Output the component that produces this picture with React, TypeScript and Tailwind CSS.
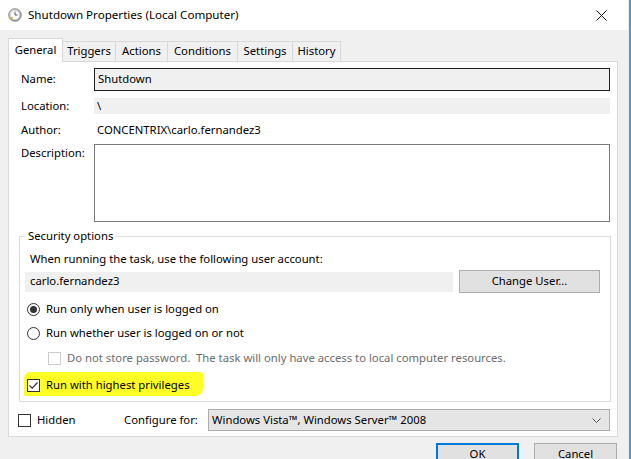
import React from 'react'

const font = { fontFamily: '"Noto Sans", "Segoe UI", sans-serif' }

function TaskIcon() {
  return (
    <svg width="14" height="14" viewBox="0 0 14 14">
      <defs>
        <radialGradient id="g" cx="40%" cy="35%" r="70%">
          <stop offset="0%" stopColor="#f4f4f4" />
          <stop offset="100%" stopColor="#9a9a9a" />
        </radialGradient>
      </defs>
      <circle cx="7" cy="7" r="6.3" fill="url(#g)" stroke="#7b7b7b" strokeWidth="0.8" />
      <circle cx="7" cy="7" r="4.6" fill="#fbfbfb" stroke="#c9c9c9" strokeWidth="0.5" />
      <path d="M7 3.6V7H9.6" fill="none" stroke="#5d5d5d" strokeWidth="1" />
      <path d="M2.5 9.5L5 10.2" stroke="#d9a400" strokeWidth="1.2" />
    </svg>
  )
}

function Tab({ label, active, w }: { label: string; active?: boolean; w: string }) {
  if (active) {
    return (
      <div className={`h-[24px] flex items-center justify-center bg-white border border-b-0 border-[#d9d9d9] -mb-px relative z-10 ${w}`}>
        {label}
      </div>
    )
  }
  return (
    <div className={`h-[20px] flex items-center justify-center bg-[#f0f0f0] border border-l-0 border-[#d9d9d9] border-b-0 ${w}`}>
      {label}
    </div>
  )
}

function Radio({ checked }: { checked?: boolean }) {
  return (
    <span className="w-[13px] h-[13px] rounded-full border border-[#333] bg-white flex items-center justify-center shrink-0">
      {checked && <span className="w-[7px] h-[7px] rounded-full bg-[#333]" />}
    </span>
  )
}

function Check({ checked, disabled }: { checked?: boolean; disabled?: boolean }) {
  return (
    <span
      className={
        disabled
          ? 'w-[13px] h-[13px] border border-[#cccccc] bg-white shrink-0'
          : 'w-[13px] h-[13px] border border-[#333] bg-white shrink-0 flex items-center justify-center'
      }
    >
      {checked && (
        <svg width="11" height="11" viewBox="0 0 11 11">
          <path d="M1.5 5.5L4.2 8.2L9.5 2.5" fill="none" stroke="#333" strokeWidth="1.2" />
        </svg>
      )}
    </span>
  )
}

export default function App() {
  return (
    <div className="w-[631px] h-[459px] overflow-hidden flex bg-[#f0f0f0] text-[11.3px] text-black" style={font}>
      <div className="w-[628px] flex flex-col">
        {/* title bar */}
        <div className="h-[30px] bg-white flex items-center shrink-0">
          <div className="ml-[8px] mr-[6px] flex items-center">
            <TaskIcon />
          </div>
          <span className="text-[11.6px] leading-none">Shutdown Properties (Local Computer)</span>
          <div className="ml-auto mr-[21px]">
            <svg width="11" height="11" viewBox="0 0 11 11">
              <path d="M0.5 0.5L10.5 10.5M10.5 0.5L0.5 10.5" stroke="#111" strokeWidth="1" />
            </svg>
          </div>
        </div>

        {/* tabs */}
        <div className="pl-[8px] pt-[8px] flex items-end shrink-0">
          <Tab label="General" active w="w-[55px]" />
          <Tab label="Triggers" w="w-[53px]" />
          <Tab label="Actions" w="w-[52px]" />
          <Tab label="Conditions" w="w-[70px]" />
          <Tab label="Settings" w="w-[55px]" />
          <Tab label="History" w="w-[48px]" />
        </div>

        {/* panel */}
        <div className="ml-[8px] w-[610px] h-[376px] shrink-0 bg-white border border-[#d9d9d9] flex flex-col">
          <div className="mt-[6px] flex items-center h-[23px] pl-[12px]">
            <span className="w-[73px]">Name:</span>
            <div className="w-[516px] h-[23px] border border-[#1e1e1e] bg-[#f0f0f0] pl-[3px] flex items-center">Shutdown</div>
          </div>
          <div className="mt-[7px] flex items-center h-[16px] pl-[12px]">
            <span className="w-[73px]">Location:</span>
            <div className="w-[516px] h-[16px] bg-[#f0f0f0] pl-[3px] flex items-center">\</div>
          </div>
          <div className="mt-[8px] flex items-center h-[16px] pl-[12px]">
            <span className="w-[73px]">Author:</span>
            <span className="pl-[3px]">CONCENTRIX\carlo.fernandez3</span>
          </div>
          <div className="mt-[6px] flex items-start pl-[12px]">
            <span className="w-[73px] leading-[18px]">Description:</span>
            <div className="w-[516px] h-[78px] border border-[#7a7a7a] bg-white" />
          </div>

          {/* group box */}
          <div className="relative ml-[10px] mr-[6px] mt-[14px] h-[166px] border border-[#dcdcdc] pl-[10px] pr-[9px] flex flex-col">
            <span className="absolute -top-[9px] left-[5px] bg-white px-[3px] leading-[16px]">Security options</span>
            <div className="mt-[14px] h-[16px] flex items-center">When running the task, use the following user account:</div>
            <div className="mt-[3px] -ml-[5px] flex items-center">
              <div className="w-[428px] h-[20px] bg-[#f0f0f0] pl-[5px] flex items-center">carlo.fernandez3</div>
              <div className="ml-[6px] w-[141px] h-[23px] bg-[#e1e1e1] border border-[#adadad] flex items-center justify-center">Change User...</div>
            </div>
            <div className="mt-[8px] -ml-[3px] flex items-center gap-[6px] h-[16px]">
              <Radio checked />
              <span>Run only when user is logged on</span>
            </div>
            <div className="mt-[8px] -ml-[3px] flex items-center gap-[6px] h-[16px]">
              <Radio />
              <span>Run whether user is logged on or not</span>
            </div>
            <div className="mt-[9px] ml-[18px] flex items-center gap-[6px] h-[16px] text-[#6d6d6d]">
              <Check disabled />
              <span className="whitespace-pre">Do not store password.  The task will only have access to local computer resources.</span>
            </div>
            <div className="relative mt-[11px] -ml-[3px] flex items-center gap-[6px] h-[16px]">
              <span className="absolute -left-[3px] -top-[5px] w-[179px] h-[24px] bg-[#ffff26] rounded-tl-[6px] rounded-tr-[3px] rounded-br-[8px] rounded-bl-[2px]" />
              <span className="relative flex items-center gap-[6px]">
                <Check checked />
                <span>Run with highest privileges</span>
              </span>
            </div>
          </div>

          <div className="mt-[7px] pl-[9px] flex items-center h-[22px]">
            <Check />
            <span className="ml-[6px] w-[87px]">Hidden</span>
            <span className="w-[84px]">Configure for:</span>
            <div className="w-[402px] h-[22px] bg-[#e5e5e5] border border-[#adadad] pl-[3px] pr-[8px] flex items-center">
              <span>Windows Vista™, Windows Server™ 2008</span>
              <svg className="ml-auto" width="9" height="5" viewBox="0 0 9 5">
                <path d="M0.5 0.5L4.5 4.5L8.5 0.5" fill="none" stroke="#555" strokeWidth="1" />
              </svg>
            </div>
          </div>
        </div>

        {/* buttons */}
        <div className="mt-[6px] flex justify-end pr-[11px] gap-[15px] shrink-0">
          <div className="w-[83px] h-[23px] bg-[#e1e1e1] border-[2px] border-[#0078d7] flex items-center justify-center">OK</div>
          <div className="w-[83px] h-[23px] bg-[#e1e1e1] border border-[#adadad] flex items-center justify-center">Cancel</div>
        </div>
      </div>
      <div className="w-[1px] bg-[#e8eef4]" />
      <div className="w-[2px] bg-[#4a9ad8]" />
    </div>
  )
}
